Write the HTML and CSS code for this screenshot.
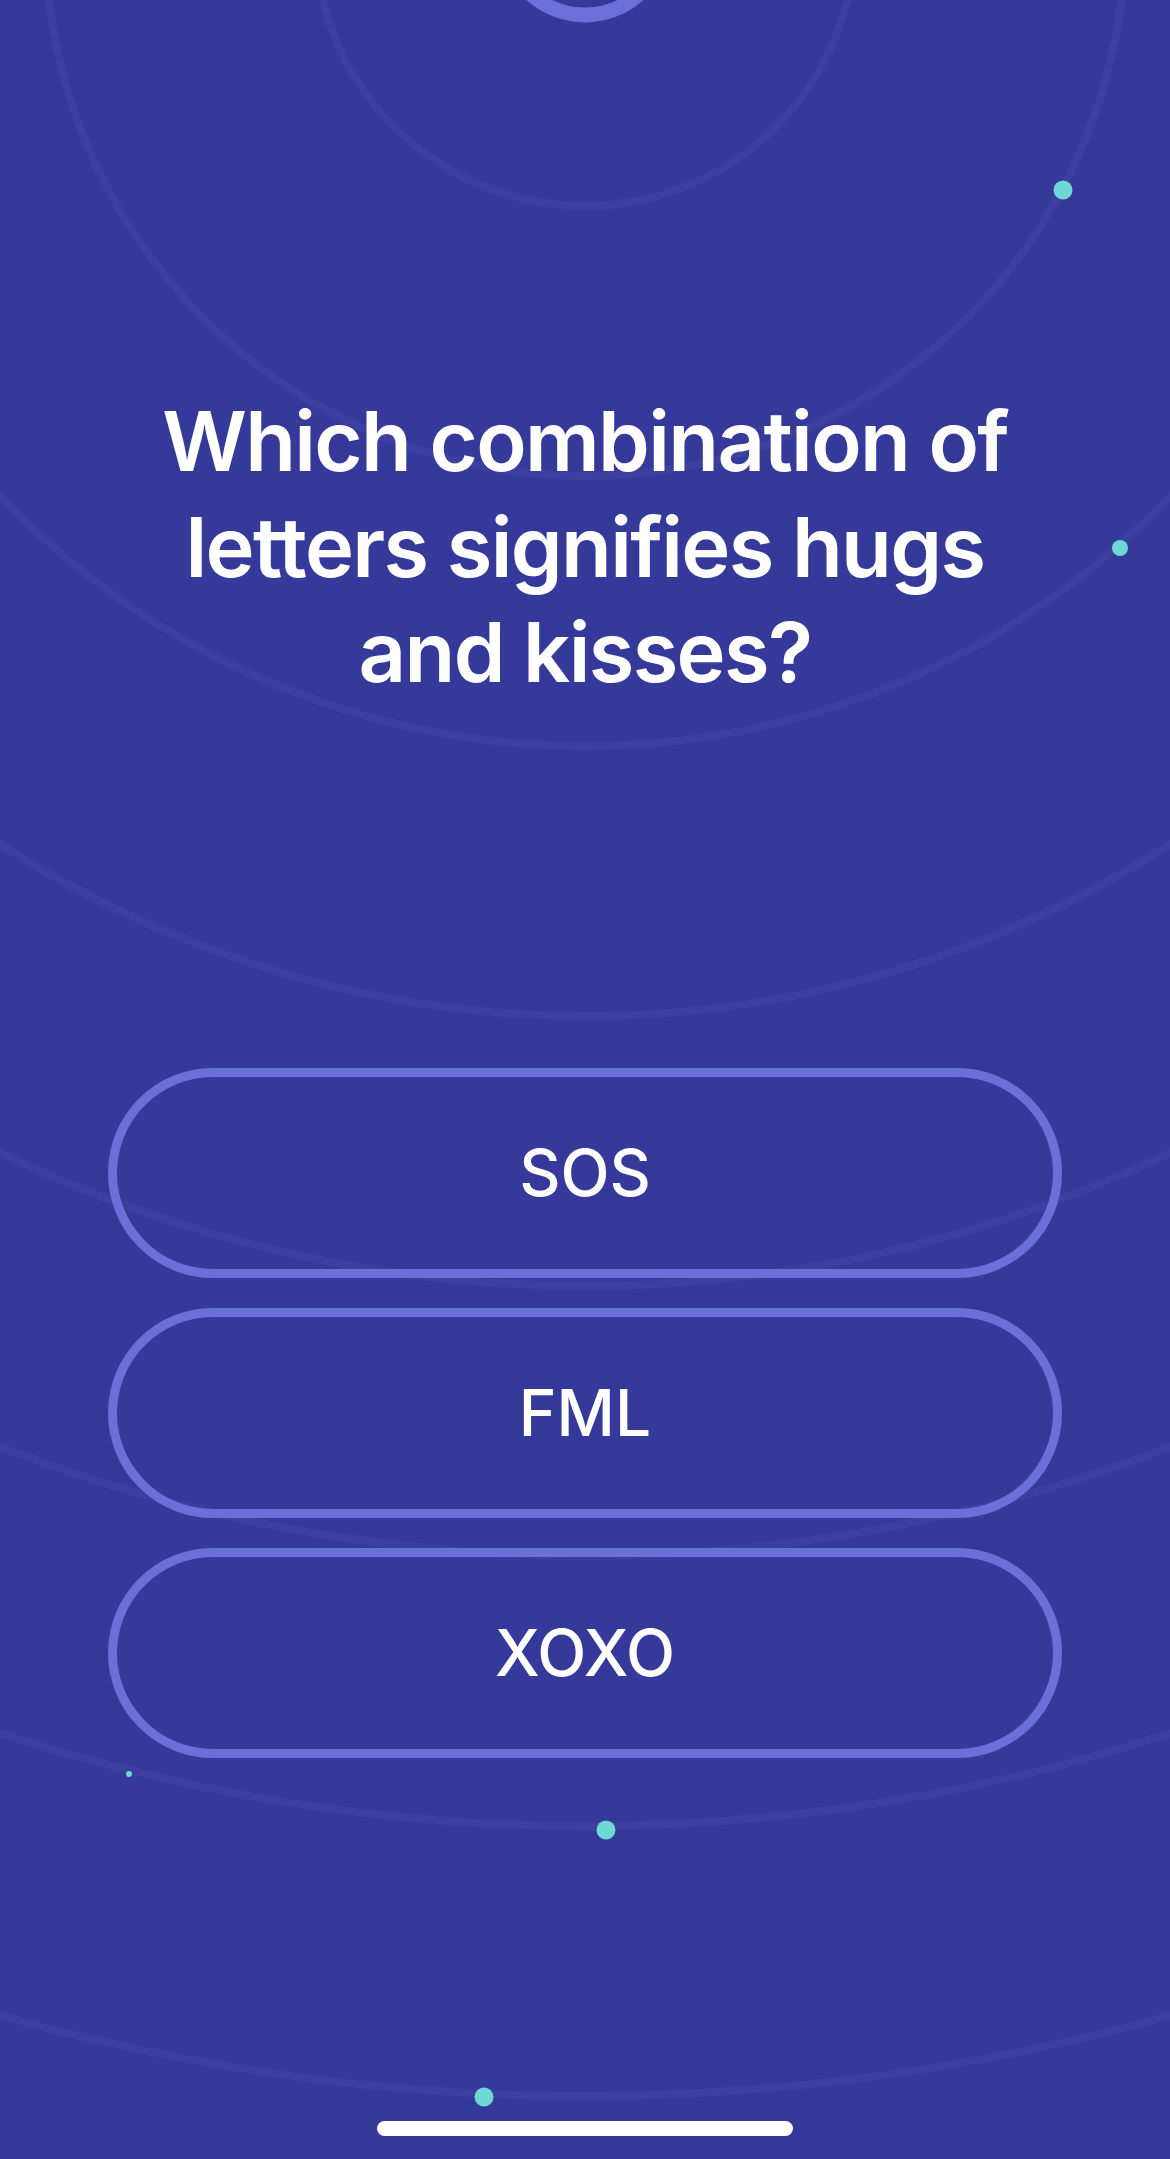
FILE: index.html
```html
<!DOCTYPE html>
<html lang="en">
<head>
<meta charset="utf-8">
<title>Trivia question</title>
<link rel="stylesheet" href="styles.css">
</head>
<body>
<main class="screen">
  <svg class="backdrop" width="1170" height="2159" viewBox="0 0 1170 2159" aria-hidden="true">
    <g class="rings" fill="none">
      <circle cx="585" cy="-64" r="270"/>
      <circle cx="585" cy="-64" r="540"/>
      <circle cx="585" cy="-64" r="810"/>
      <circle cx="585" cy="-64" r="1080"/>
      <circle cx="585" cy="-64" r="1350"/>
      <circle cx="585" cy="-64" r="1620"/>
      <circle cx="585" cy="-64" r="1890"/>
      <circle cx="585" cy="-64" r="2160"/>
    </g>
    <circle class="timer-ring" cx="585" cy="-65" r="80" fill="none"/>
    <g class="dots">
      <circle cx="1063" cy="190" r="9.5"/>
      <circle cx="1120" cy="548" r="8"/>
      <circle cx="129" cy="1774" r="3"/>
      <circle cx="606" cy="1830" r="9.5"/>
      <circle cx="484" cy="2097" r="9.5"/>
    </g>
  </svg>

  <h1 class="question">Which combination of letters signifies hugs and kisses?</h1>

  <div class="answers">
    <button class="answer" type="button">SOS</button>
    <button class="answer" type="button">FML</button>
    <button class="answer" type="button">XOXO</button>
  </div>

  <div class="home-indicator"></div>
</main>
</body>
</html>
```

FILE: styles.css
```css
* {
  box-sizing: border-box;
}

html, body {
  margin: 0;
  padding: 0;
  background: #35399a;
}

.screen {
  position: relative;
  width: 1170px;
  height: 2159px;
  overflow: hidden;
  display: flex;
  flex-direction: column;
  align-items: center;
  font-family: Inter, "Noto Sans", sans-serif;
  color: #ffffff;
}

.backdrop {
  position: absolute;
  left: 0;
  top: 0;
}

.rings circle {
  stroke: rgba(255, 255, 255, 0.03);
  stroke-width: 8;
}

.timer-ring {
  stroke: #6b6fd8;
  stroke-width: 15;
}

.dots circle {
  fill: #6dd8d4;
}

.question {
  position: relative;
  margin: 389px 0 0;
  width: 880px;
  font-size: 83px;
  line-height: 105.5px;
  font-weight: 600;
  letter-spacing: -0.02em;
  text-align: center;
}

.answers {
  position: relative;
  margin-top: 362px;
  width: 954px;
  display: flex;
  flex-direction: column;
  gap: 30px;
}

.answer {
  height: 210px;
  border: 9px solid #6b6fd8;
  border-radius: 105px;
  background: transparent;
  color: #ffffff;
  font-family: Inter, "Noto Sans", sans-serif;
  font-size: 64px;
  font-weight: 500;
  display: flex;
  align-items: center;
  justify-content: center;
  padding: 0;
}

.home-indicator {
  position: relative;
  margin-top: auto;
  margin-bottom: 23px;
  width: 416px;
  height: 15px;
  border-radius: 8px;
  background: #ffffff;
}
```
